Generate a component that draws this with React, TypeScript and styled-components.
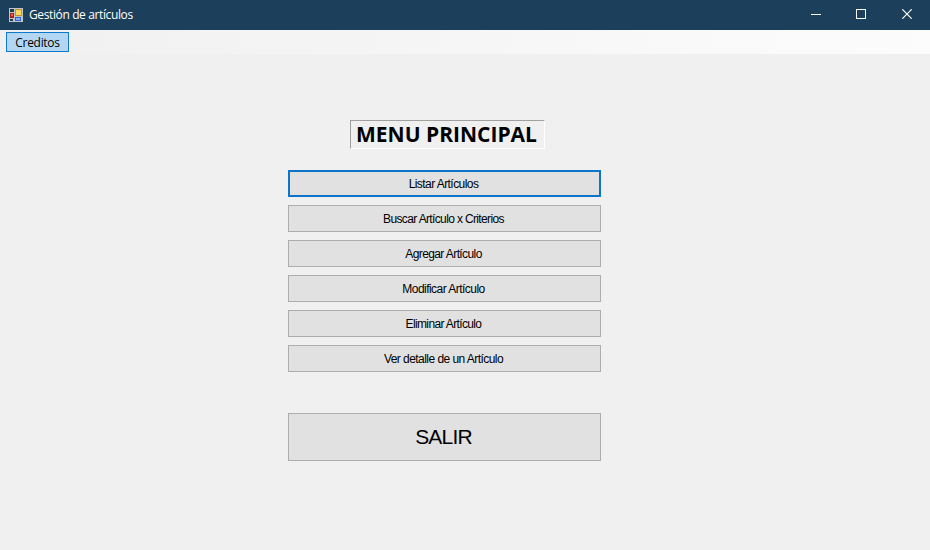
import React from "react";
import styled, { createGlobalStyle } from "styled-components";

const GlobalStyle = createGlobalStyle`
  * { box-sizing: border-box; }
  body { margin: 0; overflow: hidden; }
`;

const Window = styled.div`
  width: 930px;
  height: 550px;
  display: flex;
  flex-direction: column;
  background: #f0f0f0;
  color: #000;
  font-family: "Liberation Sans", Arial, sans-serif;
`;

const TitleBar = styled.header`
  height: 30px;
  display: flex;
  align-items: center;
  padding-left: 9px;
  background: #1c3f5b;
  color: #fff;
`;

const Title = styled.span`
  flex: 1;
  margin-left: 6px;
  font: 12px/16px "Open Sans", "Noto Sans", sans-serif;
  letter-spacing: -0.38px;
`;

const WindowControl = styled.button<{ $width?: number }>`
  width: ${(p) => p.$width ?? 46}px;
  height: 30px;
  padding: 0 0 2px;
  border: 0;
  background: transparent;
  display: flex;
  align-items: center;
  justify-content: center;
`;

const MenuStrip = styled.nav`
  height: 24px;
  display: flex;
  align-items: flex-start;
  padding: 2px 6px;
  background: linear-gradient(90deg, #f0f0f0, #fcfcfc);
`;

const MenuItem = styled.button`
  width: 63px;
  height: 20px;
  padding: 0;
  border: 1px solid #0f78cf;
  background: #b3d7f3;
  color: #000;
  font: 12px/17px "Open Sans", "Noto Sans", sans-serif;
  letter-spacing: -0.3px;
`;

const Content = styled.main`
  flex: 1;
  display: flex;
  flex-direction: column;
  align-items: flex-start;
  padding: 66px 0 0 288px;
`;

const Heading = styled.h1`
  width: 195px;
  height: 29px;
  margin: 0 0 21px 62px;
  padding-right: 2px;
  border: 1px solid;
  border-color: #a0a0a0 #fff #fff #a0a0a0;
  font: bold 21px/27px "Open Sans", "Noto Sans", sans-serif;
  text-align: center;
  white-space: nowrap;
`;

const MenuList = styled.div`
  width: 313px;
  display: flex;
  flex-direction: column;
  gap: 8px;
`;

const ActionButton = styled.button<{ $focused?: boolean; $spacing: number }>`
  height: 27px;
  padding: 1px 2px 0 0;
  border: ${(p) => (p.$focused ? "2px solid #0c75c9" : "1px solid #adadad")};
  background: #e1e1e1;
  color: #000;
  font: 12px/14px "Liberation Sans", Arial, sans-serif;
  letter-spacing: ${(p) => p.$spacing}px;
`;

const ExitButton = styled.button`
  width: 313px;
  height: 48px;
  margin-top: 41px;
  padding: 0 2px 0 0;
  border: 1px solid #adadad;
  background: #e1e1e1;
  color: #000;
  font: 21px/24px "Liberation Sans", Arial, sans-serif;
  letter-spacing: -0.8px;
`;

const actions = [
  { label: "Listar Artículos", spacing: -0.56 },
  { label: "Buscar Artículo x Criterios", spacing: -0.64 },
  { label: "Agregar Artículo", spacing: -0.6 },
  { label: "Modificar Artículo", spacing: -0.54 },
  { label: "Eliminar Artículo", spacing: -0.64 },
  { label: "Ver detalle de un Artículo", spacing: -0.55 },
];

function FormIcon() {
  return (
    <svg width="14" height="14" viewBox="0 0 14 14" shapeRendering="crispEdges" aria-hidden="true">
      <path fill="#bfc5ca" d="M0 0h14v14H0z" />
      <path fill="#26394a" d="M1 1h4v3H1zM1 11h3v2H1z" />
      <path fill="#a91f1c" d="M1 5h4v5H1z" />
      <path fill="#e2684f" d="M2 6h2v2H2z" />
      <path fill="#c8941c" d="M6 1h7v7H6z" />
      <path fill="#f9d85c" d="M7 2h5v5H7z" />
      <path fill="#3565c4" d="M6 9h6v4H6z" />
      <path fill="#86aeef" d="M7 10h4v2H7z" />
    </svg>
  );
}

export default function App() {
  return (
    <>
      <GlobalStyle />
      <Window>
        <TitleBar>
          <FormIcon />
          <Title>Gestión de artículos</Title>
          <WindowControl aria-label="Minimizar" $width={44}>
            <svg width="10" height="10" shapeRendering="crispEdges"><path fill="#fff" d="M0 5h10v1H0z" /></svg>
          </WindowControl>
          <WindowControl aria-label="Maximizar">
            <svg width="10" height="10" shapeRendering="crispEdges"><path fill="none" stroke="#fff" d="M.5.5h9v9h-9z" /></svg>
          </WindowControl>
          <WindowControl aria-label="Cerrar">
            <svg width="10" height="10"><path fill="none" stroke="#fff" strokeWidth="1.2" d="M.3.3l9.4 9.4M9.7.3L.3 9.7" /></svg>
          </WindowControl>
        </TitleBar>
        <MenuStrip>
          <MenuItem>Creditos</MenuItem>
        </MenuStrip>
        <Content>
          <Heading>MENU PRINCIPAL</Heading>
          <MenuList>
            {actions.map((a, i) => (
              <ActionButton key={a.label} $focused={i === 0} $spacing={a.spacing}>
                {a.label}
              </ActionButton>
            ))}
          </MenuList>
          <ExitButton>SALIR</ExitButton>
        </Content>
      </Window>
    </>
  );
}
